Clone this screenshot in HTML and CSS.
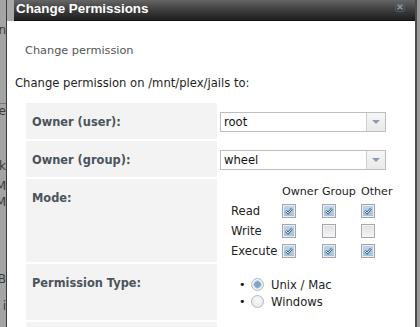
FILE: index.html
```html
<!DOCTYPE html>
<html lang="en">
<head>
	<meta charset="UTF-8">
	<title>Change Permissions</title>
	<link rel="stylesheet" href="styles.css">
</head>
<body>
	<div class="screen">
		<!-- page behind the dialog, left edge -->
		<div class="under-left">
			<div class="frag f1">n</div>
			<div class="frag f2">e</div>
			<div class="frag f3">k</div>
			<div class="frag f4">M</div>
			<div class="frag f5">M</div>
			<div class="frag f6">B</div>
			<div class="frag f7">i</div>
		</div>

		<div class="dialog">
			<div class="title-wrap">
				<div class="titlebar">
					<span class="title">Change Permissions</span>
					<svg class="close" width="10" height="10" viewBox="0 0 10 10">
						<rect x="0.5" y="0.5" width="9" height="9" rx="1.5" fill="none" stroke="#4f5a62" stroke-width="1"/>
						<path d="M2.5 2.5 L7.5 7.5 M7.5 2.5 L2.5 7.5" stroke="#8797a3" stroke-width="1.6"/>
					</svg>
				</div>
			</div>

			<div class="content">
				<div class="heading">Change permission</div>
				<div class="intro">Change permission on /mnt/plex/jails to:</div>

				<div class="perm-grid">
					<div class="lbl">Owner (user):</div>
					<div class="val">
						<div class="select"><span class="sel-text">root</span><span class="sel-arrow"></span></div>
					</div>

					<div class="lbl">Owner (group):</div>
					<div class="val">
						<div class="select"><span class="sel-text">wheel</span><span class="sel-arrow"></span></div>
					</div>

					<div class="lbl">Mode:</div>
					<div class="val val-mode">
						<div class="mode">
							<span></span><span class="hd">Owner</span><span class="hd">Group</span><span class="hd">Other</span>

							<span>Read</span>
							<span><i class="cb on"><svg viewBox="0 0 14 14"><path d="M3.5 7 L6 9.5 L10.5 4"/><path class="w" d="M3.5 7 L6 9.5 L10.5 4"/></svg></i></span>
							<span><i class="cb on"><svg viewBox="0 0 14 14"><path d="M3.5 7 L6 9.5 L10.5 4"/><path class="w" d="M3.5 7 L6 9.5 L10.5 4"/></svg></i></span>
							<span><i class="cb on"><svg viewBox="0 0 14 14"><path d="M3.5 7 L6 9.5 L10.5 4"/><path class="w" d="M3.5 7 L6 9.5 L10.5 4"/></svg></i></span>

							<span>Write</span>
							<span><i class="cb on"><svg viewBox="0 0 14 14"><path d="M3.5 7 L6 9.5 L10.5 4"/><path class="w" d="M3.5 7 L6 9.5 L10.5 4"/></svg></i></span>
							<span><i class="cb"></i></span>
							<span><i class="cb"></i></span>

							<span>Execute</span>
							<span><i class="cb on"><svg viewBox="0 0 14 14"><path d="M3.5 7 L6 9.5 L10.5 4"/><path class="w" d="M3.5 7 L6 9.5 L10.5 4"/></svg></i></span>
							<span><i class="cb on"><svg viewBox="0 0 14 14"><path d="M3.5 7 L6 9.5 L10.5 4"/><path class="w" d="M3.5 7 L6 9.5 L10.5 4"/></svg></i></span>
							<span><i class="cb on"><svg viewBox="0 0 14 14"><path d="M3.5 7 L6 9.5 L10.5 4"/><path class="w" d="M3.5 7 L6 9.5 L10.5 4"/></svg></i></span>
						</div>
					</div>

					<div class="lbl">Permission Type:</div>
					<div class="val val-type">
						<ul class="radios">
							<li><span class="dot">&bull;</span><i class="rb on"></i><span>Unix / Mac</span></li>
							<li><span class="dot">&bull;</span><i class="rb"></i><span>Windows</span></li>
						</ul>
					</div>

					<div class="lbl">Set permission recursively:</div>
					<div class="val"></div>
				</div>
			</div>
		</div>

		<!-- page behind the dialog, right edge -->
		<div class="under-right"></div>
	</div>
</body>
</html>
```

FILE: styles.css
```css
html,body{margin: 0;padding: 0;}
body{width: 420px;height: 327px;overflow: hidden;background: #9c9c9c;font-family: "DejaVu Sans", Verdana, sans-serif;font-size: 11.6px;color: #222;}

.screen{display: flex;height: 327px;}

/* background page strips */
.under-left{width: 6px;flex: none;background: #a4a4a4;border-right: 1px solid #3b3b3b;overflow: hidden;}
.frag{text-align: right;font-size: 12px;line-height: 14px;color: #3a3a3a;white-space: nowrap;direction: rtl;}
.f1{margin-top: 23px;}
.f2{margin-top: 66px;border-top: 1px solid #777;}
.f3{margin-top: 41px;}
.f4{margin-top: 6px;}
.f5{margin-top: 2px;}
.f6{margin-top: 63px;}
.f7{margin-top: 13px;}
.under-right{width: 3px;flex: none;background: #9a9a9a;border-left: 2px solid #4b4b4b;}

/* dialog */
.dialog{width: 408px;flex: none;background: #fff;display: flex;flex-direction: column;}
.title-wrap{background: #a9a9a9;}
.titlebar{margin-left: 7px;height: 21px;display: flex;align-items: flex-start;justify-content: space-between;background: linear-gradient(#656565, #3a3a3a 55%, #1f1f1f);border-bottom: 1px solid #111;box-sizing: border-box;}
.title{color: #fff;font-family: "Liberation Sans", Arial, sans-serif;font-weight: bold;font-size: 13.4px;line-height: 17px;padding-left: 2px;}
.close{margin: 2px 10px 0 0;}

.content{padding: 0 0 0 8px;}
.heading{margin: 22px 0 0 10px;font-size: 11.3px;line-height: 15px;color: #555;}
.intro{margin-top: 18px;line-height: 14px;color: #1e1e1e;}

/* form table */
.perm-grid{display: grid;grid-template-columns: 191px 1fr;row-gap: 2px;margin: 13px 0 0 11px;}
.lbl{background: #f3f3f3;padding: 12px 6px 0;line-height: 14px;font-weight: bold;font-size: 11.4px;color: #4b535c;}
.val{padding: 9px 3px 7px;}

.select{width: 164px;height: 18px;border: 1px solid #bdbdbd;display: flex;background: #fff;}
.sel-text{flex: 1;padding-left: 3px;line-height: 18px;color: #111;}
.sel-arrow{width: 18px;border-left: 1px solid #cfcfcf;background: linear-gradient(#f6f6f6, #e9e9e9);display: flex;align-items: center;justify-content: center;}
.sel-arrow::after{content: "";border-top: 4px solid #8c9cb0;border-left: 4px solid transparent;border-right: 4px solid transparent;}

.val-mode{padding: 2px 0 1px 14px;}
.mode{display: grid;grid-template-columns: 51px 40px 39px auto;grid-auto-rows: 20px;align-items: center;}
.mode span{display: flex;align-items: center;white-space: nowrap;}
.mode .hd{font-size: 11.1px;}

.cb{display: inline-block;width: 12px;height: 12px;border: 1px solid #a3a7ab;background: linear-gradient(#dedede, #f6f6f6);box-shadow: inset 0 0 0 1px #f4f4f4;}
.cb.on{background: linear-gradient(#c3d6e8, #a3bfd8);box-shadow: inset 0 0 0 1px #e6eef6;}
.cb svg{display: block;width: 12px;height: 12px;}
.cb path{fill: none;stroke: #2f557f;stroke-width: 2.6;}
.cb path.w{stroke: #fff;stroke-width: 1.1;}

.val-type{padding: 12px 0 10px;}
.radios{list-style: none;margin: 0;padding: 0 0 0 22px;}
.radios li{display: flex;align-items: center;height: 17px;}
.dot{width: 12px;font-size: 11px;color: #111;}
.rb{display: inline-block;width: 11px;height: 11px;border-radius: 50%;border: 1px solid #b4b8bc;background: radial-gradient(circle at 50% 40%, #fbfbfb, #e4e4e4);margin-right: 7px;}
.rb.on{background: radial-gradient(circle, #7ea6cc 0 3px, #c9d9e8 3.5px 4px, #f2f2f2 4.5px);}
```
